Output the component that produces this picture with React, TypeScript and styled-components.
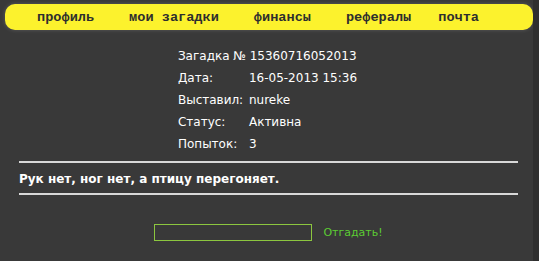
import React from "react";
import { styled, createGlobalStyle } from "styled-components";

const Global = createGlobalStyle`
  html, body {
    margin: 0;
    padding: 0;
    background: #2f2f2f;
  }
`;

const menu = [
  { title: "профиль", pull: 0 },
  { title: "мои загадки", pull: 0 },
  { title: "финансы", pull: 0 },
  { title: "рефералы", pull: 0 },
  { title: "почта", pull: 8 },
];

const info = [
  { label: "Дата:", value: "16-05-2013 15:36" },
  { label: "Выставил:", value: "nureke" },
  { label: "Статус:", value: "Активна" },
  { label: "Попыток:", value: "3" },
];

const App = () => {
  return (
    <Page>
      <Global />
      <Nav>
        {menu.map((m) => (
          <NavItem key={m.title} $pull={m.pull}>
            {m.title}
          </NavItem>
        ))}
      </Nav>
      <Main>
        <Info>
          <Title>Загадка № 15360716052013</Title>
          {info.map((row) => (
            <React.Fragment key={row.label}>
              <Label>{row.label}</Label>
              <Value>{row.value}</Value>
            </React.Fragment>
          ))}
        </Info>
        <Riddle>Рук нет, ног нет, а птицу перегоняет.</Riddle>
        <Answer>
          <Input type="text" />
          <Guess>Отгадать!</Guess>
        </Answer>
      </Main>
    </Page>
  );
};

export default App;

const Page = styled.div`
  width: 533px;
  height: 261px;
  background: #393939;
  padding-top: 4px;
  box-sizing: border-box;
  overflow: hidden;
`;

const Nav = styled.div`
  margin-left: 5px;
  width: 528px;
  height: 26px;
  background: #fcf22d;
  border-radius: 10px;
  box-shadow: 0 0 4px rgba(255, 255, 255, 0.18);
  display: flex;
  align-items: center;
  padding-left: 32px;
  box-sizing: border-box;
  gap: 35px;
`;

const NavItem = styled.span<{ $pull: number }>`
  font-family: "Liberation Mono", "Courier New", monospace;
  font-weight: bold;
  font-size: 13.6px;
  color: #2e2e2e;
  margin-left: ${(p) => -p.$pull}px;
  white-space: nowrap;
`;

const Main = styled.div`
  margin: 0 15px 0 19px;
  padding-top: 15px;
  display: flex;
  flex-direction: column;
  font-family: "DejaVu Sans", Verdana, sans-serif;
  color: #fff;
`;

const Info = styled.div`
  align-self: center;
  display: grid;
  grid-template-columns: 71px auto;
  font-size: 12px;
  line-height: 22px;
  padding-bottom: 6px;
  margin-left: -2px;
`;

const Title = styled.div`
  grid-column: 1 / 3;
`;

const Label = styled.div``;

const Value = styled.div``;

const Riddle = styled.div`
  border-top: 2px solid #d8d8d8;
  border-bottom: 2px solid #d8d8d8;
  font-weight: bold;
  font-size: 12px;
  line-height: 14px;
  padding: 9px 0 7px;
`;

const Answer = styled.div`
  align-self: center;
  display: flex;
  align-items: center;
  gap: 11px;
  margin-top: 29px;
`;

const Input = styled.input`
  width: 158px;
  height: 17px;
  box-sizing: border-box;
  border: 1px solid #8cc63f;
  background: transparent;
  outline: none;
  padding: 0 3px;
  color: #fff;
`;

const Guess = styled.span`
  font-size: 11px;
  color: #5ccc33;
  cursor: pointer;
`;
